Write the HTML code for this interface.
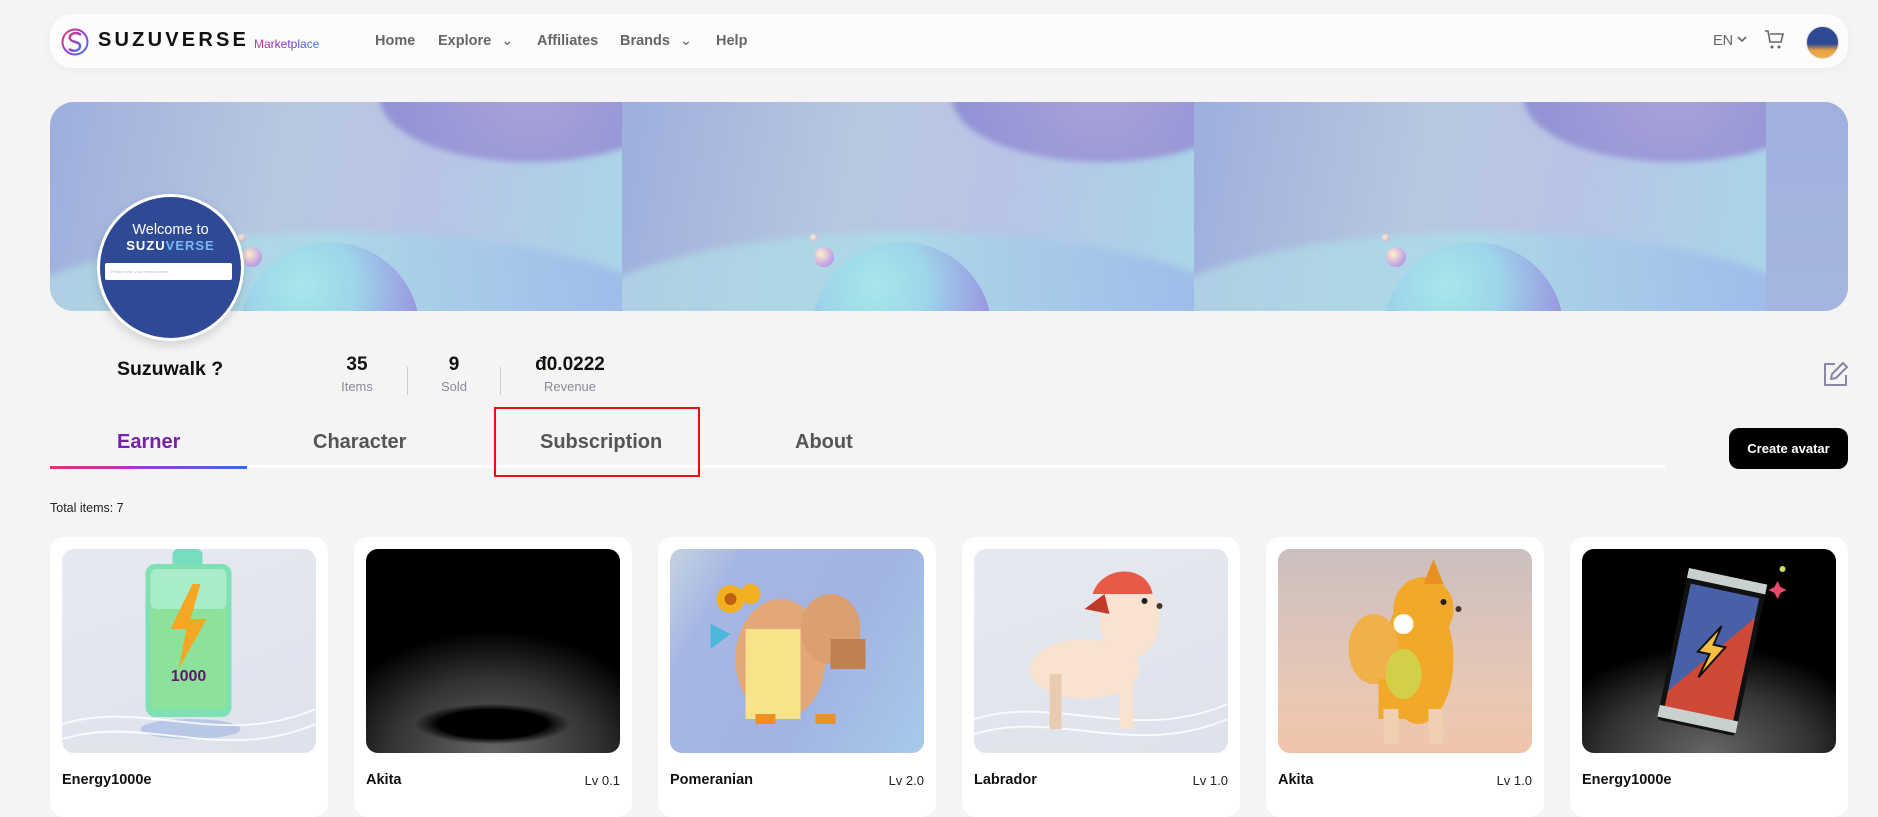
<!DOCTYPE html>
<html><head><meta charset="utf-8"><style>
*{box-sizing:border-box;margin:0;padding:0}
body{width:1878px;height:800px;overflow:hidden;background:#f4f4f4;font-family:"Liberation Sans",sans-serif;position:relative}
.abs{position:absolute}
.nav{left:50px;top:14px;width:1798px;height:54px;background:#fcfcfc;border-radius:22px;box-shadow:0 2px 10px rgba(0,0,0,.04)}
.nl{top:33px;font-size:14.5px;font-weight:bold;color:#666}
.banner{left:50px;top:102px;width:1798px;height:209px;border-radius:24px;overflow:hidden;background:#a3b4e0}
.tile{position:absolute;top:0;width:572px;height:209px;overflow:hidden;background:linear-gradient(100deg,#9eaedd 0%,#b7c8e0 40%,#b8c4e6 65%,#a9d6e8 100%)}
.tile .t1{position:absolute;left:330px;top:-70px;width:300px;height:130px;border-radius:50%;background:radial-gradient(circle at 50% 40%,#a9a4d8,#8e8fd6);filter:blur(3px)}
.tile .t2{position:absolute;left:-60px;top:130px;width:700px;height:200px;border-radius:50%;background:linear-gradient(90deg,#b7dbe6,#a8e0ea,#97a8ea);opacity:.7;filter:blur(4px)}
.tile .sp{position:absolute;left:190px;top:140px;width:180px;height:180px;border-radius:50%;background:radial-gradient(circle at 35% 25%,#a6e8ea 0%,#9ed5ea 30%,#9a96e0 65%,#8f7fe0 100%)}
.tile .b1{position:absolute;left:192px;top:145px;width:20px;height:20px;border-radius:50%;background:radial-gradient(circle at 35% 35%,#fff0c8,#c6a7e6 60%,#9c8de0)}
.tile .b2{position:absolute;left:188px;top:132px;width:8px;height:8px;border-radius:50%;background:radial-gradient(circle at 35% 35%,#fff0c8,#b6a0e0)}
.st{top:354px;text-align:center}
.st b{display:block;font-size:19px;color:#111}
.st span{display:block;font-size:13px;color:#8a8a9a;margin-top:3px}
.tab{top:431px;font-size:20px;font-weight:bold;color:#555}
.card{position:absolute;top:537px;width:278px;height:280px;background:#fff;border-radius:14px}
.img{position:absolute;left:12px;top:12px;width:254px;height:204px;border-radius:12px;overflow:hidden}
.ct{position:absolute;left:12px;top:235px;font-size:14.5px;font-weight:bold;color:#111}
.lv{position:absolute;right:12px;top:236px;font-size:13px;color:#222}
.wave{background:linear-gradient(160deg,#e6e9f0,#dde2ec)}
</style></head><body>
<div class="abs nav"></div>
<svg class="abs" style="left:60px;top:27px" width="30" height="30" viewBox="0 0 30 30"><defs><linearGradient id="lg" x1="0" y1="0" x2="1" y2="1"><stop offset="0" stop-color="#e0356c"/><stop offset=".5" stop-color="#9b3bd0"/><stop offset="1" stop-color="#3c7be0"/></linearGradient></defs><circle cx="15" cy="15" r="12.5" fill="none" stroke="url(#lg)" stroke-width="2"/><path d="M21 8C16 4 8 7 10 12c2 4 11 2 10 8-1 4-7 5-11 2" fill="none" stroke="url(#lg)" stroke-width="2.4"/></svg>
<div class="abs" style="left:98px;top:29px;font-size:20px;font-weight:bold;letter-spacing:3.2px;color:#111">SUZUVERSE</div>
<div class="abs" style="left:254px;top:37px;font-size:12px;background:linear-gradient(90deg,#d0308a,#7a2fd0,#2f7fe0);-webkit-background-clip:text;color:transparent">Marketplace</div>
<div class="abs nl" style="left:375px">Home</div>
<div class="abs nl" style="left:438px">Explore <span style="font-weight:normal;display:inline-block;margin-left:6px">&#8964;</span></div>
<div class="abs nl" style="left:537px">Affiliates</div>
<div class="abs nl" style="left:620px">Brands <span style="font-weight:normal;display:inline-block;margin-left:6px">&#8964;</span></div>
<div class="abs nl" style="left:716px">Help</div>
<div class="abs" style="left:1713px;top:33px;font-size:14.5px;color:#666">EN</div>
<svg class="abs" style="left:1737px;top:35px" width="10" height="8" viewBox="0 0 10 8"><path d="M1 2l4 4 4-4" stroke="#555" stroke-width="1.5" fill="none"/></svg>
<svg class="abs" style="left:1764px;top:29px" width="22" height="22" viewBox="0 0 22 22"><path d="M1 2h3l2 11h11l2-8H6" fill="none" stroke="#666" stroke-width="1.6"/><circle cx="8" cy="18" r="1.5" fill="#666"/><circle cx="15" cy="18" r="1.5" fill="#666"/></svg>
<div class="abs" style="left:1806px;top:26px;width:33px;height:33px;border-radius:50%;background:linear-gradient(180deg,#2f4a94 55%,#e8a040 75%,#f0b050);border:1px solid #ddd"></div>

<div class="abs banner">
<div class="tile" style="left:0"><div class="t2"></div><div class="t1"></div><div class="sp"></div><div class="b1"></div><div class="b2"></div></div>
<div class="tile" style="left:572px"><div class="t2"></div><div class="t1"></div><div class="sp"></div><div class="b1"></div><div class="b2"></div></div>
<div class="tile" style="left:1144px"><div class="t2"></div><div class="t1"></div><div class="sp"></div><div class="b1"></div><div class="b2"></div></div>
<div class="tile" style="left:1716px;background:linear-gradient(180deg,#a2b0dd,#a4b6e0)"></div>
</div>

<div class="abs" style="left:97px;top:194px;width:147px;height:147px;border-radius:50%;background:#2f4a94;border:3px solid #fff;box-shadow:0 4px 10px rgba(0,0,0,.15);overflow:hidden">
<div style="position:absolute;top:25px;width:100%;text-align:center;color:#fff;font-size:14.5px">Welcome to</div>
<div style="position:absolute;top:41px;width:100%;text-align:center;color:#fff;font-size:13px;font-weight:bold;letter-spacing:1px">SUZU<span style="color:#7ab8f5">VERSE</span></div>
<div style="position:absolute;left:5px;top:66px;width:127px;height:17px;background:#fff;border-radius:2px;font-size:4px;color:#bbb;padding:6px 6px">Please enter your email address</div>
</div>

<div class="abs" style="left:117px;top:358px;font-size:19.5px;font-weight:bold;color:#111">Suzuwalk ?</div>
<div class="abs st" style="left:337px;width:40px"><b>35</b><span>Items</span></div>
<div class="abs" style="left:407px;top:367px;width:1px;height:28px;background:#ccc"></div>
<div class="abs st" style="left:434px;width:40px"><b>9</b><span>Sold</span></div>
<div class="abs" style="left:500px;top:367px;width:1px;height:28px;background:#ccc"></div>
<div class="abs st" style="left:525px;width:90px"><b>đ0.0222</b><span>Revenue</span></div>
<svg class="abs" style="left:1822px;top:361px" width="27" height="27" viewBox="0 0 27 27"><path d="M13 3H3v21h21V14" fill="none" stroke="#8a84a8" stroke-width="2" stroke-linejoin="round"/><path d="M9 18l1-5 11-11 4 4-11 11z" fill="none" stroke="#8a84a8" stroke-width="2" stroke-linejoin="round"/></svg>

<div class="abs tab" style="left:117px;color:#7a1fa8">Earner</div>
<div class="abs tab" style="left:313px">Character</div>
<div class="abs tab" style="left:540px">Subscription</div>
<div class="abs tab" style="left:795px">About</div>
<div class="abs" style="left:50px;top:465px;width:1615px;height:3px;background:#fff"></div>
<div class="abs" style="left:50px;top:466px;width:197px;height:3px;background:linear-gradient(90deg,#e0356c,#9b3bd0,#2f6fe0)"></div>
<div class="abs" style="left:494px;top:407px;width:206px;height:70px;border:2px solid #e81010"></div>
<div class="abs" style="left:1729px;top:428px;width:119px;height:41px;background:#000;border-radius:10px;color:#fff;font-size:13px;font-weight:bold;text-align:center;line-height:41px">Create avatar</div>
<div class="abs" style="left:50px;top:501px;font-size:12.5px;color:#222">Total items: 7</div>

<div class="card" style="left:50px"><div class="img wave">
<svg width="254" height="204" viewBox="0 0 253 204"><ellipse cx="128" cy="180" rx="50" ry="10" fill="#b9c7e6"/><path d="M0 175C80 150 160 200 253 160" stroke="#fff" stroke-width="2" fill="none" opacity=".8"/><path d="M0 190C80 165 160 215 253 175" stroke="#fff" stroke-width="2" fill="none" opacity=".8"/><rect x="110" y="0" width="30" height="20" rx="6" fill="#78dcc0"/><rect x="83" y="15" width="86" height="153" rx="10" fill="#7fe0b4"/><rect x="88" y="20" width="76" height="140" rx="6" fill="#8ce29a"/><rect x="88" y="20" width="76" height="40" rx="6" fill="#a8ecc8"/><path d="M130 35l-22 45h16l-8 40 28-50h-16l10-35z" fill="#f5a623"/><text x="126" y="132" text-anchor="middle" font-family="Liberation Sans" font-weight="bold" font-size="16" fill="#5b1a6a">1000</text></svg></div>
<div class="ct">Energy1000e</div></div>

<div class="card" style="left:354px"><div class="img" style="background:radial-gradient(ellipse 90% 80% at 50% 100%,#666 0%,#333 45%,#000 75%)"><div style="position:absolute;left:50px;top:155px;width:153px;height:40px;border-radius:50%;background:radial-gradient(#000 50%,rgba(0,0,0,0) 72%)"></div></div>
<div class="ct">Akita</div><div class="lv">Lv 0.1</div></div>

<div class="card" style="left:658px"><div class="img" style="background:linear-gradient(120deg,#c5d4e0 0%,#a6b6e4 20%,#a2b4e2 60%,#a6caea 100%)">
<svg width="254" height="204" viewBox="0 0 253 204"><ellipse cx="110" cy="110" rx="45" ry="60" fill="#e2a878"/><rect x="75" y="80" width="55" height="90" fill="#f8e28a"/><ellipse cx="160" cy="80" rx="30" ry="35" fill="#dca070"/><circle cx="60" cy="50" r="14" fill="#f2b020"/><circle cx="60" cy="50" r="6" fill="#c06010"/><circle cx="80" cy="45" r="10" fill="#f2b020"/><rect x="160" y="90" width="35" height="30" fill="#c08050"/><path d="M40 75l20 10-20 15z" fill="#4ab8d8"/><rect x="85" y="165" width="20" height="10" fill="#f09020"/><rect x="145" y="165" width="20" height="10" fill="#f09020"/></svg></div>
<div class="ct">Pomeranian</div><div class="lv">Lv 2.0</div></div>

<div class="card" style="left:962px"><div class="img wave">
<svg width="254" height="204" viewBox="0 0 253 204"><path d="M0 170C80 145 160 195 253 155" stroke="#fff" stroke-width="2" fill="none" opacity=".8"/><path d="M0 185C80 160 160 210 253 170" stroke="#fff" stroke-width="2" fill="none" opacity=".8"/><ellipse cx="110" cy="120" rx="55" ry="30" fill="#f8e2d0"/><rect x="75" y="125" width="12" height="55" fill="#e8cbb0"/><rect x="145" y="125" width="14" height="55" fill="#f8e2d0"/><ellipse cx="155" cy="70" rx="30" ry="40" fill="#f8e2d0"/><path d="M118 45c10-30 55-30 60 0z" fill="#e85a48"/><path d="M110 60l20-15 5 20z" fill="#c03a2a"/><circle cx="170" cy="52" r="3" fill="#222"/><circle cx="185" cy="57" r="3" fill="#4a3020"/></svg></div>
<div class="ct">Labrador</div><div class="lv">Lv 1.0</div></div>

<div class="card" style="left:1266px"><div class="img" style="background:linear-gradient(180deg,#cbbfbf,#e8c8b5 70%,#f0c4aa)">
<svg width="254" height="204" viewBox="0 0 253 204"><ellipse cx="140" cy="110" rx="35" ry="65" fill="#f2a828"/><ellipse cx="95" cy="100" rx="25" ry="35" fill="#f0b04a"/><ellipse cx="145" cy="60" rx="30" ry="32" fill="#f2a828"/><path d="M155 10l10 25-20 0z" fill="#e89020"/><rect x="100" y="130" width="60" height="40" fill="#f2a828"/><ellipse cx="125" cy="125" rx="18" ry="25" fill="#d2d048"/><circle cx="125" cy="75" r="10" fill="#fff"/><rect x="105" y="160" width="15" height="35" fill="#f0d0b0"/><rect x="150" y="160" width="15" height="35" fill="#f0d0b0"/><circle cx="165" cy="53" r="3" fill="#222"/><circle cx="180" cy="60" r="3" fill="#4a3020"/></svg></div>
<div class="ct">Akita</div><div class="lv">Lv 1.0</div></div>

<div class="card" style="left:1570px"><div class="img" style="background:radial-gradient(ellipse 90% 70% at 50% 100%,#666 0%,#333 45%,#000 75%)">
<svg width="254" height="204" viewBox="0 0 253 204"><g transform="rotate(12 126 110)"><rect x="88" y="25" width="80" height="155" rx="4" fill="#111"/><path d="M93 40h70v80L93 150z" fill="#4860a8"/><path d="M163 60v110H93v-20z" fill="#d04838"/><rect x="88" y="25" width="80" height="10" fill="#c8d0d0"/><rect x="88" y="165" width="80" height="12" fill="#c8d0d0"/><path d="M132 75l-18 30h12l-6 25 20-35h-12z" fill="#f5c040" stroke="#111" stroke-width="2"/></g><circle cx="200" cy="20" r="3" fill="#c8e060"/><path d="M195 32l3 6 6 3-6 3-3 6-3-6-6-3 6-3z" fill="#e84a6a"/></svg></div>
<div class="ct">Energy1000e</div></div>
</body></html>
